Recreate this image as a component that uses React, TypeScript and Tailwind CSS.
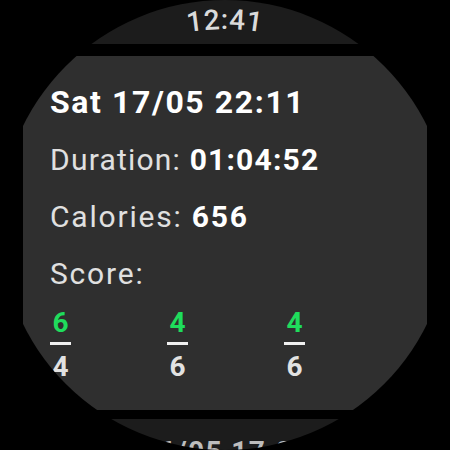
import React from 'react';

const font = { fontFamily: 'Roboto, "Noto Sans", sans-serif' };

interface ScoreProps {
  mine: number;
  theirs: number;
}

const SetScore = ({ mine, theirs }: ScoreProps) => (
  <div className="w-[117px] flex">
    <div className="flex flex-col items-center">
      <span className="text-[28px] leading-[26px] font-bold text-[#1fdc5c]">{mine}</span>
      <div className="mt-[6px] h-[3px] w-[21px] bg-[#f0f0f0]" />
      <span className="mt-[9px] text-[28px] leading-[26px] font-bold text-[#e2e2e2]">{theirs}</span>
    </div>
  </div>
);

export default function App() {
  // curved clock text along the top of the round screen
  const clock = [
    { c: '1', cls: '-rotate-[7deg] translate-y-[2px]' },
    { c: '2', cls: '-rotate-[3deg] translate-y-[0.5px]' },
    { c: ':', cls: '' },
    { c: '4', cls: 'rotate-[3deg] translate-y-[0.5px]' },
    { c: '1', cls: 'rotate-[8deg] translate-y-[2px]' },
  ];

  return (
    <div className="w-[450px] h-[450px] bg-black" style={font}>
      <div className="w-[450px] h-[450px] rounded-full overflow-hidden flex flex-col">
        {/* Time chip */}
        <div className="h-[44px] w-full shrink-0 bg-[#1c1c1c] flex justify-center pt-[3px]">
          <div className="flex text-[28px] leading-[34px] font-medium tracking-[0.04em] text-[#dadada]">
            {clock.map((ch, i) => (
              <span key={i} className={`inline-block ${ch.cls}`}>
                {ch.c}
              </span>
            ))}
          </div>
        </div>

        {/* Workout card */}
        <div className="mt-[12px] mx-[23px] h-[354px] shrink-0 bg-[#2f2f2f] pl-[27px] pt-[18px] flex flex-col">
          <div className="text-[32px] leading-[57px] font-bold tracking-[0.05em] text-white whitespace-nowrap">
            Sat 17/05 22:11
          </div>
          <div className="text-[30px] leading-[57px] tracking-[0.04em] text-[#e0e0e0] whitespace-nowrap">
            Duration: <span className="font-bold text-white">01:04:52</span>
          </div>
          <div className="text-[30px] leading-[57px] tracking-[0.06em] text-[#e0e0e0] whitespace-nowrap">
            Calories: <span className="font-bold text-white">656</span>
          </div>
          <div className="text-[30px] leading-[57px] tracking-[0.06em] text-[#e0e0e0]">Score:</div>
          <div className="flex mt-[8px]">
            <SetScore mine={6} theirs={4} />
            <SetScore mine={4} theirs={6} />
            <SetScore mine={4} theirs={6} />
          </div>
        </div>

        {/* Next card, mostly off screen */}
        <div className="mt-[9px] mx-[23px] flex-1 bg-[#1c1c1c] pl-[73px] pt-[16px]">
          <div className="text-[28px] leading-[34px] font-bold tracking-[0.05em] text-[#bdbdbd] whitespace-nowrap">
            Fri 16/05 17:03
          </div>
        </div>
      </div>
    </div>
  );
}
